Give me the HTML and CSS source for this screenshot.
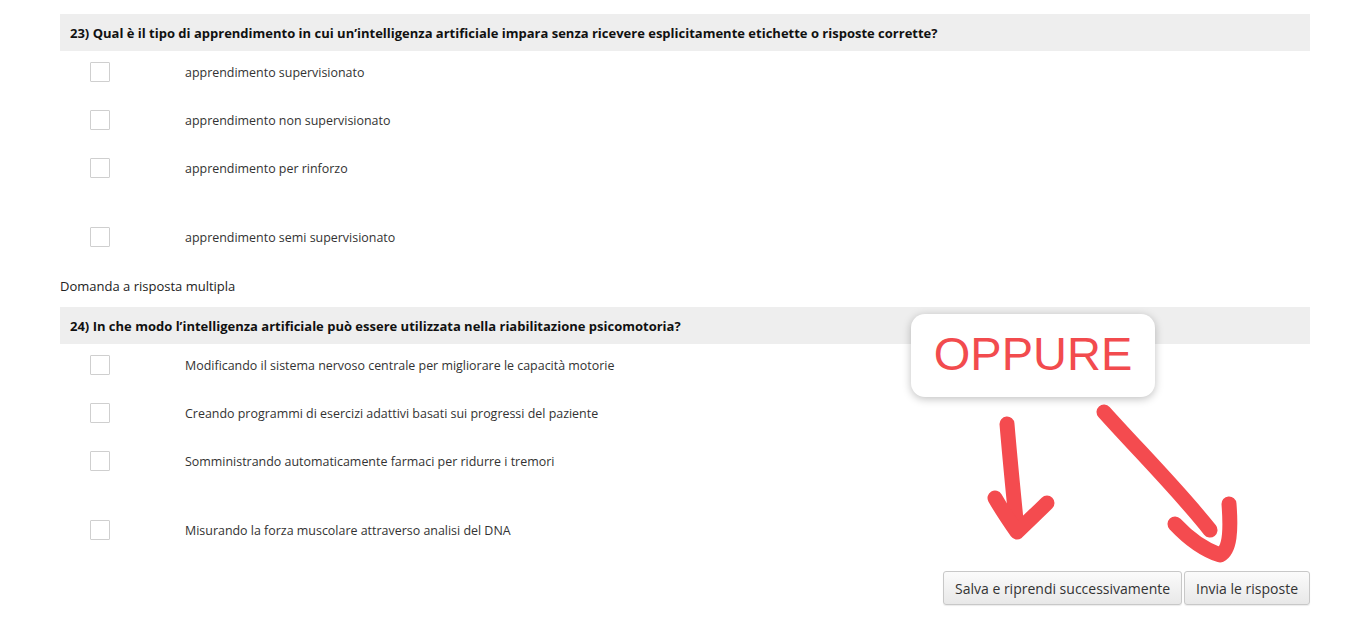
FILE: index.html
```html
<!DOCTYPE html>
<html lang="it">
<head>
    <meta charset="UTF-8">
    <title>Questionario</title>
    <link rel="stylesheet" href="styles.css">
</head>
<body>
    <div class="quiz">
        <div class="question">
            <div class="q-title">23) Qual è il tipo di apprendimento in cui un’intelligenza artificiale impara senza ricevere esplicitamente etichette o risposte corrette?</div>
            <div class="options">
                <label class="option"><span class="box"></span><span>apprendimento supervisionato</span></label>
                <label class="option"><span class="box"></span><span>apprendimento non supervisionato</span></label>
                <label class="option tall"><span class="box"></span><span>apprendimento per rinforzo</span></label>
                <label class="option"><span class="box"></span><span>apprendimento semi supervisionato</span></label>
            </div>
        </div>

        <p class="q-type">Domanda a risposta multipla</p>

        <div class="question">
            <div class="q-title">24) In che modo l’intelligenza artificiale può essere utilizzata nella riabilitazione psicomotoria?</div>
            <div class="options">
                <label class="option"><span class="box"></span><span>Modificando il sistema nervoso centrale per migliorare le capacità motorie</span></label>
                <label class="option"><span class="box"></span><span>Creando programmi di esercizi adattivi basati sui progressi del paziente</span></label>
                <label class="option tall"><span class="box"></span><span>Somministrando automaticamente farmaci per ridurre i tremori</span></label>
                <label class="option"><span class="box"></span><span>Misurando la forza muscolare attraverso analisi del DNA</span></label>
            </div>
        </div>

        <div class="actions">
            <button class="btn">Salva e riprendi successivamente</button>
            <button class="btn">Invia le risposte</button>
        </div>
    </div>

    <!-- annotation over the page -->
    <div class="callout">OPPURE</div>
    <svg class="arrows" width="1365" height="628" viewBox="0 0 1365 628">
        <g fill="none" stroke="#f44b4f" stroke-width="15" stroke-linecap="round" stroke-linejoin="round">
            <path d="M1007 424 C1010 460 1014 500 1017 530"/>
            <path d="M995 498 C1003 512 1010 522 1017 532 C1027 522 1038 512 1047 503"/>
            <path d="M1104 412 C1140 452 1180 492 1210 530"/>
            <path d="M1175 524 C1190 540 1205 550 1220 555 C1230 550 1231 530 1229 504"/>
        </g>
    </svg>
</body>
</html>
```

FILE: styles.css
```css
* {
    margin: 0;
    padding: 0;
    box-sizing: border-box;
}

body {
    font-family: 'Open Sans', 'DejaVu Sans', sans-serif;
    font-size: 12.45px;
    color: #333;
    background: #fff;
    width: 1365px;
    height: 628px;
    overflow: hidden;
    position: relative;
}

.quiz {
    width: 1250px;
    margin-left: 60px;
    padding-top: 14px;
}

/* Question */
.q-title {
    height: 37px;
    display: flex;
    align-items: center;
    padding-left: 10px;
    background: #eeeeee;
    font-size: 13px;
    font-weight: 700;
    color: #111;
}

.options {
    padding-top: 1px;
    display: flex;
    flex-direction: column;
    gap: 8px;
}

.option {
    height: 40px;
    display: flex;
    align-items: center;
    padding-left: 30px;
    gap: 75px;
}

.option.tall {
    margin-bottom: 21px;
}

.box {
    width: 20px;
    height: 20px;
    border: 1px solid #cfcfcf;
    border-radius: 1px;
    background: #fff;
    flex-shrink: 0;
}

.q-type {
    font-size: 13px;
    line-height: 18px;
    margin: 20px 0 12px;
    color: #222;
}

/* Buttons */
.actions {
    margin-top: 21px;
    display: flex;
    justify-content: flex-end;
    gap: 2px;
}

.btn {
    font-family: 'Open Sans', sans-serif;
    font-size: 14px;
    color: #333;
    height: 34px;
    padding: 0 11px;
    border: 1px solid #c8c8c8;
    border-radius: 3px;
    background: linear-gradient(#fbfbfb, #e8e8e8);
    box-shadow: 0 1px 1px rgba(0, 0, 0, 0.08);
    cursor: pointer;
}

/* Annotation */
.callout {
    position: absolute;
    left: 911px;
    top: 314px;
    width: 244px;
    height: 83px;
    display: flex;
    align-items: center;
    justify-content: center;
    padding-bottom: 4px;
    background: #fff;
    border-radius: 14px;
    box-shadow: 0 2px 8px rgba(0, 0, 0, 0.25);
    font-family: 'Liberation Sans', Arial, sans-serif;
    font-size: 47px;
    color: #f24b4e;
}

.arrows {
    position: absolute;
    left: 0;
    top: 0;
    pointer-events: none;
}
```
